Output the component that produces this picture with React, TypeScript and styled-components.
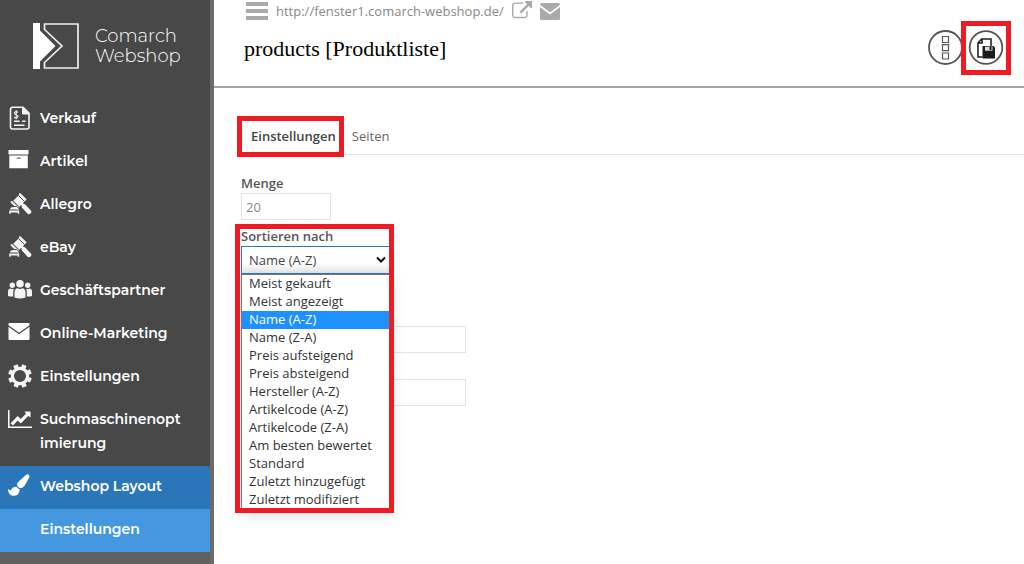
import React from 'react';
import styled, { createGlobalStyle } from 'styled-components';

const Global = createGlobalStyle`
  *, *::before, *::after { box-sizing: border-box; }
  body { margin: 0; background: #fff; font: 13px/18px 'Open Sans', sans-serif; color: #444; }
  #root { display: flex; min-height: 100vh; }
  a { color: inherit; text-decoration: none; }
  ul { list-style: none; margin: 0; padding: 0; }
`;

const Page = styled.div`
  display: flex;
  flex: 1;
`;

const Sidebar = styled.aside`
  width: 214px;
  flex: none;
  background: #606060;
  border-right: 4px solid #6b6b6b;
  font-family: Montserrat, Inter, sans-serif;
  color: #fff;
`;

const SidebarTop = styled.div`
  background: #484848;
`;

const Brand = styled.a`
  display: flex;
  align-items: center;
  gap: 15px;
  height: 98px;
  padding: 0 0 6px 33px;
  font-size: 18px;
  line-height: 20px;
  font-weight: 300;
`;

const NavItem = styled.a<{ $bg?: string }>`
  display: flex;
  align-items: flex-start;
  gap: 8px;
  padding: 8px 28px 11px 8px;
  background: ${(p) => p.$bg ?? 'transparent'};
  font-size: 14px;
  line-height: 24px;
  font-weight: 600;
  overflow-wrap: anywhere;
  svg, i { flex: none; width: 24px; height: 24px; }
`;

const Main = styled.main`
  flex: 1;
  min-width: 0;
`;

const Header = styled.header`
  display: flex;
  justify-content: space-between;
  align-items: flex-start;
  height: 88px;
  padding: 0 13px 0 30px;
  border-bottom: 2px solid #a3a3a3;
`;

const UrlBar = styled.div`
  display: flex;
  align-items: center;
  gap: 8px;
  height: 22px;
  padding-left: 2px;
  color: #888;
  font-weight: 500;
  svg { display: block; }
`;

const Title = styled.h1`
  margin: 13px 0 0;
  font: 400 22px/28px 'Liberation Serif', serif;
  color: #000;
`;

const PlainButton = styled.button`
  display: block;
  padding: 0;
  border: 0;
  background: none;
  color: inherit;
  svg { display: block; overflow: visible; }
`;

const Actions = styled.div`
  display: flex;
  align-items: center;
  padding-top: 21px;
`;

const Marked = styled.div`
  position: relative;
  padding: 5px 3px;
  border: 5px solid #ed1c24;
  background: #fff;
`;

const Content = styled.div`
  padding: 28px 0 0 27px;
`;

const Tabs = styled.nav`
  display: flex;
  height: 39px;
  border-bottom: 1px solid #e2e2e2;
`;

const Tab = styled.a<{ $active?: boolean }>`
  position: relative;
  display: flex;
  align-items: center;
  padding: ${(p) => (p.$active ? '2px 8px 0 10px' : '2px 8px 0')};
  color: ${(p) => (p.$active ? '#444' : '#666')};
  font-weight: ${(p) => (p.$active ? 600 : 400)};
`;

const Frame = styled.span<{ $inset: string }>`
  position: absolute;
  inset: ${(p) => p.$inset};
  border: 5px solid #ed1c24;
  pointer-events: none;
`;

const Form = styled.form`
  display: flex;
  flex-direction: column;
  align-items: flex-start;
  gap: 8px;
  padding-top: 20px;
`;

const Field = styled.div`
  position: relative;
  display: flex;
  flex-direction: column;
  min-height: 18px;
`;

const Label = styled.label`
  height: 18px;
  line-height: 16px;
  font-weight: 600;
  color: #555;
`;

const Input = styled.input<{ $wide?: boolean }>`
  width: ${(p) => (p.$wide ? 225 : 90)}px;
  height: 27px;
  margin-top: ${(p) => (p.$wide ? 18 : 0)}px;
  padding: 0 4px;
  border: 1px solid #e2e2e2;
  background: #fff;
  color: #888;
  font: inherit;
`;

const SelectBox = styled.div`
  position: relative;
  width: 149px;
  svg { position: absolute; right: 4px; top: 10px; }
`;

const Select = styled.select`
  display: block;
  appearance: none;
  width: 100%;
  height: 28px;
  padding: 0 7px;
  border: 1px solid #2a7ab9;
  border-radius: 0;
  background: linear-gradient(#fff 60%, #e8e8e8);
  color: #444;
  font: inherit;
`;

const Options = styled.ul`
  position: absolute;
  z-index: 1;
  top: 100%;
  left: 0;
  right: 0;
  border: 1px solid #777;
  background: #fff;
  box-shadow: 0 4px 14px rgba(0, 0, 0, 0.15);
`;

const Option = styled.li<{ $selected: boolean }>`
  padding: 0 7px 2px;
  line-height: 16px;
  background: ${(p) => (p.$selected ? '#1e90ff' : 'transparent')};
  color: ${(p) => (p.$selected ? '#fff' : '#333')};
  white-space: nowrap;
`;

const Logo = () => (
  <svg width="47" height="48" viewBox="0 0 47 48">
    <path fill="#fff" d="M0 1h7v7.500l15.500 15.500L7 39.500V47H0z" />
    <path fill="none" stroke="#eee" strokeWidth="1.700" d="M11.500 2H45v44H11.500v-5.500L29 24 11.500 7.500z" />
  </svg>
);

const InvoiceIcon = () => (
  <svg viewBox="0 0 24 24" fill="none" stroke="#f4f4f4">
    <path strokeWidth="1.600" d="M4.500 1.300H15L21 7v14a2 2 0 0 1-2 2H4.500a2 2 0 0 1-2-2V3.300a2 2 0 0 1 2-2z" />
    <path fill="#f4f4f4" d="M14.500 1.500V8H21z" />
    <path strokeWidth="1.400" d="M6 15.300h5.500M6 19.300h10.500M14 15.300h3.500" />
    <path strokeWidth="1.100" d="M10 6.300C8.500 5 6 5.600 6.400 7.400 6.800 9 9.800 8.500 10 10.400 10.200 12.200 7.500 12.600 6 11.200M8.200 4.300v9" />
  </svg>
);

const ArchiveIcon = () => (
  <svg viewBox="0 0 24 24" fill="#fff">
    <path d="M.5 1h20v4.500H.5zM1.300 6.500h18.500v12.700H1.300z" />
    <path stroke="#777" strokeWidth="1.200" strokeLinecap="round" d="M9 9.200h3.500" />
  </svg>
);

const GavelIcon = () => (
  <svg viewBox="0 0 24 24" fill="#f4f4f4">
    <path d="M4.500 9.500l7-7 6 6-7 7z" />
    <path stroke="#f4f4f4" strokeWidth="1.800" strokeLinecap="round" d="M11.800 2L17.500 7.500M3.500 10l6.500 6.500" />
    <path stroke="#484848" strokeWidth="1" d="M10.500 3.500l6 6M5 8.800l6 6" />
    <path stroke="#f4f4f4" strokeWidth="4.600" strokeLinecap="round" d="M16 14.500l5 5.300" />
    <path stroke="#f4f4f4" strokeWidth="2.500" d="M12.500 10.500l3 3" />
    <path stroke="#484848" strokeWidth="1" d="M1.500 14.500h7l3 3.500" />
    <path d="M3 15.500h6.500l1.200 2H1.700zM1.200 18.500h10v3.200H9.700v-1.200h-7v1.200H1.200z" />
  </svg>
);

const UsersIcon = () => (
  <svg viewBox="0 0 24 24" fill="#f4f4f4">
    <circle cx="12" cy="5.800" r="3.800" />
    <circle cx="4.300" cy="7.300" r="2.700" />
    <circle cx="19.700" cy="7.300" r="2.700" />
    <path d="M6.500 19.500v-5c0-2.500 1.300-4.200 3-4.300 1.500 1 3.500 1 5 0 1.700.1 3 1.800 3 4.300v5q-5.500 2-11 0z" />
    <path d="M0 18v-4.500c0-2 1-3 2.500-3 1.200.7 2.300.7 3.300.3Q5.200 12.500 5.200 14.500V18.500q-3 .2-5.200-.5zM24 18v-4.500c0-2-1-3-2.500-3-1.200.7-2.300.7-3.300.3Q18.800 12.500 18.800 14.500v4q3 .2 5.200-.5z" />
  </svg>
);

const MailIcon = () => (
  <svg viewBox="0 0 24 24" fill="#fff">
    <path d="M1.500 2h19q1 0 1 1v1.200L11 11.800.5 4.200V3q0-1 1-1zM.5 5.700L11 13.200l10.500-7.500V18q0 1-1 1h-19q-1 0-1-1z" />
  </svg>
);

const GearIcon = () => (
  <svg viewBox="0 0 24 24" fill="none" stroke="#f4f4f4">
    <circle cx="12" cy="12" r="7.600" strokeWidth="3.200" />
    {[0, 45, 90, 135, 180, 225, 270, 315].map((angle) => (
      <path key={angle} strokeWidth="4.600" d="M12 .2v3.800" transform={`rotate(${angle + 22} 12 12)`} />
    ))}
  </svg>
);

const ChartIcon = () => (
  <svg viewBox="0 0 2048 1792" fill="#fff">
    <path d="M2048 1536v128h-2048v-1536h128v1408h1920zm-128-1248v435q0 21-19.500 29.500t-35.500-7.500l-121-121-633 633q-10 10-23 10t-23-10l-233-233-416 416-192-192 585-585q10-10 23-10t23 10l233 233 464-464-121-121q-16-16-7.500-35.500t29.500-19.500h435q14 0 23 9t9 23z" />
  </svg>
);

const BrushIcon = () => (
  <svg viewBox="0 0 2000 1950" fill="#fff">
    <path d="M1615 0q70 0 122.500 46.500t52.500 116.500q0 63-45 151-332 629-465 752-97 91-218 91-126 0-216.500-92.500t-90.500-219.500q0-128 92-212l638-579q59-54 130-54zm-909 1034q39 76 106.500 130t150.500 76l1 71q4 213-129.500 347t-348.500 134q-123 0-218-46.500t-152.500-127.500-86.500-183-29-220q7 5 41 30t62 44.500 59 36.500 46 17q41 0 55-37 25-66 57.500-112.500t69.500-76 88-47.500 103-25.500 125-10.500z" />
  </svg>
);

const navItems: [string, () => React.ReactElement][] = [
  ['Verkauf', InvoiceIcon],
  ['Artikel', ArchiveIcon],
  ['Allegro', GavelIcon],
  ['eBay', GavelIcon],
  ['Geschäftspartner', UsersIcon],
  ['Online-Marketing', MailIcon],
  ['Einstellungen', GearIcon],
  ['Suchmaschinenoptimierung', ChartIcon],
];

const sortOptions = [
  'Meist gekauft',
  'Meist angezeigt',
  'Name (A-Z)',
  'Name (Z-A)',
  'Preis aufsteigend',
  'Preis absteigend',
  'Hersteller (A-Z)',
  'Artikelcode (A-Z)',
  'Artikelcode (Z-A)',
  'Am besten bewertet',
  'Standard',
  'Zuletzt hinzugefügt',
  'Zuletzt modifiziert',
];

export default function App() {
  const [sort, setSort] = React.useState('Name (A-Z)');
  return (
    <Page>
      <Global />
      <Sidebar>
        <SidebarTop>
          <Brand href="#">
            <Logo />
            <span>Comarch<br />Webshop</span>
          </Brand>
          <nav>
            {navItems.map(([label, Icon]) => (
              <NavItem href="#" key={label}>
                <Icon />
                <span>{label}</span>
              </NavItem>
            ))}
            <NavItem href="#" $bg="#2a76b9">
              <BrushIcon />
              <span>Webshop Layout</span>
            </NavItem>
            <NavItem href="#" $bg="#4598e0">
              <i />
              <span>Einstellungen</span>
            </NavItem>
          </nav>
        </SidebarTop>
      </Sidebar>
      <Main>
        <Header>
          <div>
            <UrlBar>
              <PlainButton aria-label="Menü">
                <svg width="22" height="18" viewBox="0 0 22 18" fill="#aaa">
                  <path d="M0 0h22v4H0zM0 7h22v4H0zM0 14h22v4H0z" />
                </svg>
              </PlainButton>
              <a href="#">http://fenster1.comarch-webshop.de/</a>
              <a href="#" aria-label="Öffnen">
                <svg width="20" height="20" viewBox="0 0 1792 1792" fill="#aaa">
                  <path d="M1408 928v320q0 119-84.500 203.500t-203.500 84.500h-832q-119 0-203.500-84.500t-84.500-203.500v-832q0-119 84.500-203.500t203.500-84.500h704q14 0 23 9t9 23v64q0 14-9 23t-23 9h-704q-66 0-113 47t-47 113v832q0 66 47 113t113 47h832q66 0 113-47t47-113v-320q0-14 9-23t23-9h64q14 0 23 9t9 23zm384-864v512q0 26-19 45t-45 19-45-19l-176-176-652 652q-10 10-23 10t-23-10l-114-114q-10-10-10-23t10-23l652-652-176-176q-19-19-19-45t19-45 45-19h512q26 0 45 19t19 45z" />
                </svg>
              </a>
              <a href="#" aria-label="Nachricht">
                <svg width="20" height="17" viewBox="0 0 20 17" fill="#aaa">
                  <path d="M1.500 0h17Q20 0 20 1.800L10 9.500 0 1.800Q0 0 1.500 0zM0 4l10 7.500L20 4v11.500q0 1.500-1.500 1.500h-17Q0 17 0 15.500z" />
                </svg>
              </a>
            </UrlBar>
            <Title>products [Produktliste]</Title>
          </div>
          <Actions>
            <PlainButton aria-label="Ansicht">
              <svg width="34" height="36" viewBox="0 0 34 36" fill="none" stroke="#555">
                <circle cx="18.500" cy="17.500" r="16.500" strokeWidth="1.800" />
                <path strokeWidth="1.200" d="M15.500 6.500h6v6h-6zM15.500 14.700h6v6h-6zM15.500 23h6v6h-6z" />
              </svg>
            </PlainButton>
            <Marked>
              <PlainButton aria-label="Speichern">
                <svg width="34" height="34" viewBox="0 0 34 34" fill="none" stroke="#555">
                  <circle cx="17" cy="16.500" r="16.300" strokeWidth="1.800" />
                  <path strokeWidth="1.600" stroke="#222" d="M13.500 26H9V12l3.500-4H22v7M9 12h4V8" />
                  <path fill="#1c1c1c" stroke="none" d="M13.500 15h11l1.500 1.500v11H13.500z" />
                  <path fill="#ddd" stroke="none" d="M16 15.700h7.500v4H16z" />
                  <path fill="#1c1c1c" stroke="none" d="M20.500 16h2v3h-2z" />
                </svg>
              </PlainButton>
            </Marked>
          </Actions>
        </Header>
        <Content>
          <Tabs>
            <Tab href="#" $active>
              Einstellungen
              <Frame $inset="0 0 -3px -4px" />
            </Tab>
            <Tab href="#">Seiten</Tab>
          </Tabs>
          <Form>
            <Field>
              <Label htmlFor="amount">Menge</Label>
              <Input id="amount" defaultValue="20" />
            </Field>
            <Field>
              <Label htmlFor="sort">Sortieren nach</Label>
              <SelectBox>
                <Select id="sort" value={sort} onChange={(e) => setSort(e.target.value)}>
                  {sortOptions.map((o) => (
                    <option key={o}>{o}</option>
                  ))}
                </Select>
                <svg width="10" height="8" viewBox="0 0 10 8" fill="none" stroke="#111" strokeWidth="2">
                  <path d="M1 1.500l4 4 4-4" />
                </svg>
                <Options role="listbox" aria-label="Sortieren nach">
                  {sortOptions.map((o) => (
                    <Option key={o} role="option" aria-selected={o === sort} $selected={o === sort} onClick={() => setSort(o)}>
                      {o}
                    </Option>
                  ))}
                  <Frame $inset="-51px -5px -4px -7px" />
                </Options>
              </SelectBox>
            </Field>
            <Field />
            <Field>
              <Input $wide aria-label="Titel" />
            </Field>
            <Field>
              <Input $wide aria-label="Beschreibung" />
            </Field>
          </Form>
        </Content>
      </Main>
    </Page>
  );
}
